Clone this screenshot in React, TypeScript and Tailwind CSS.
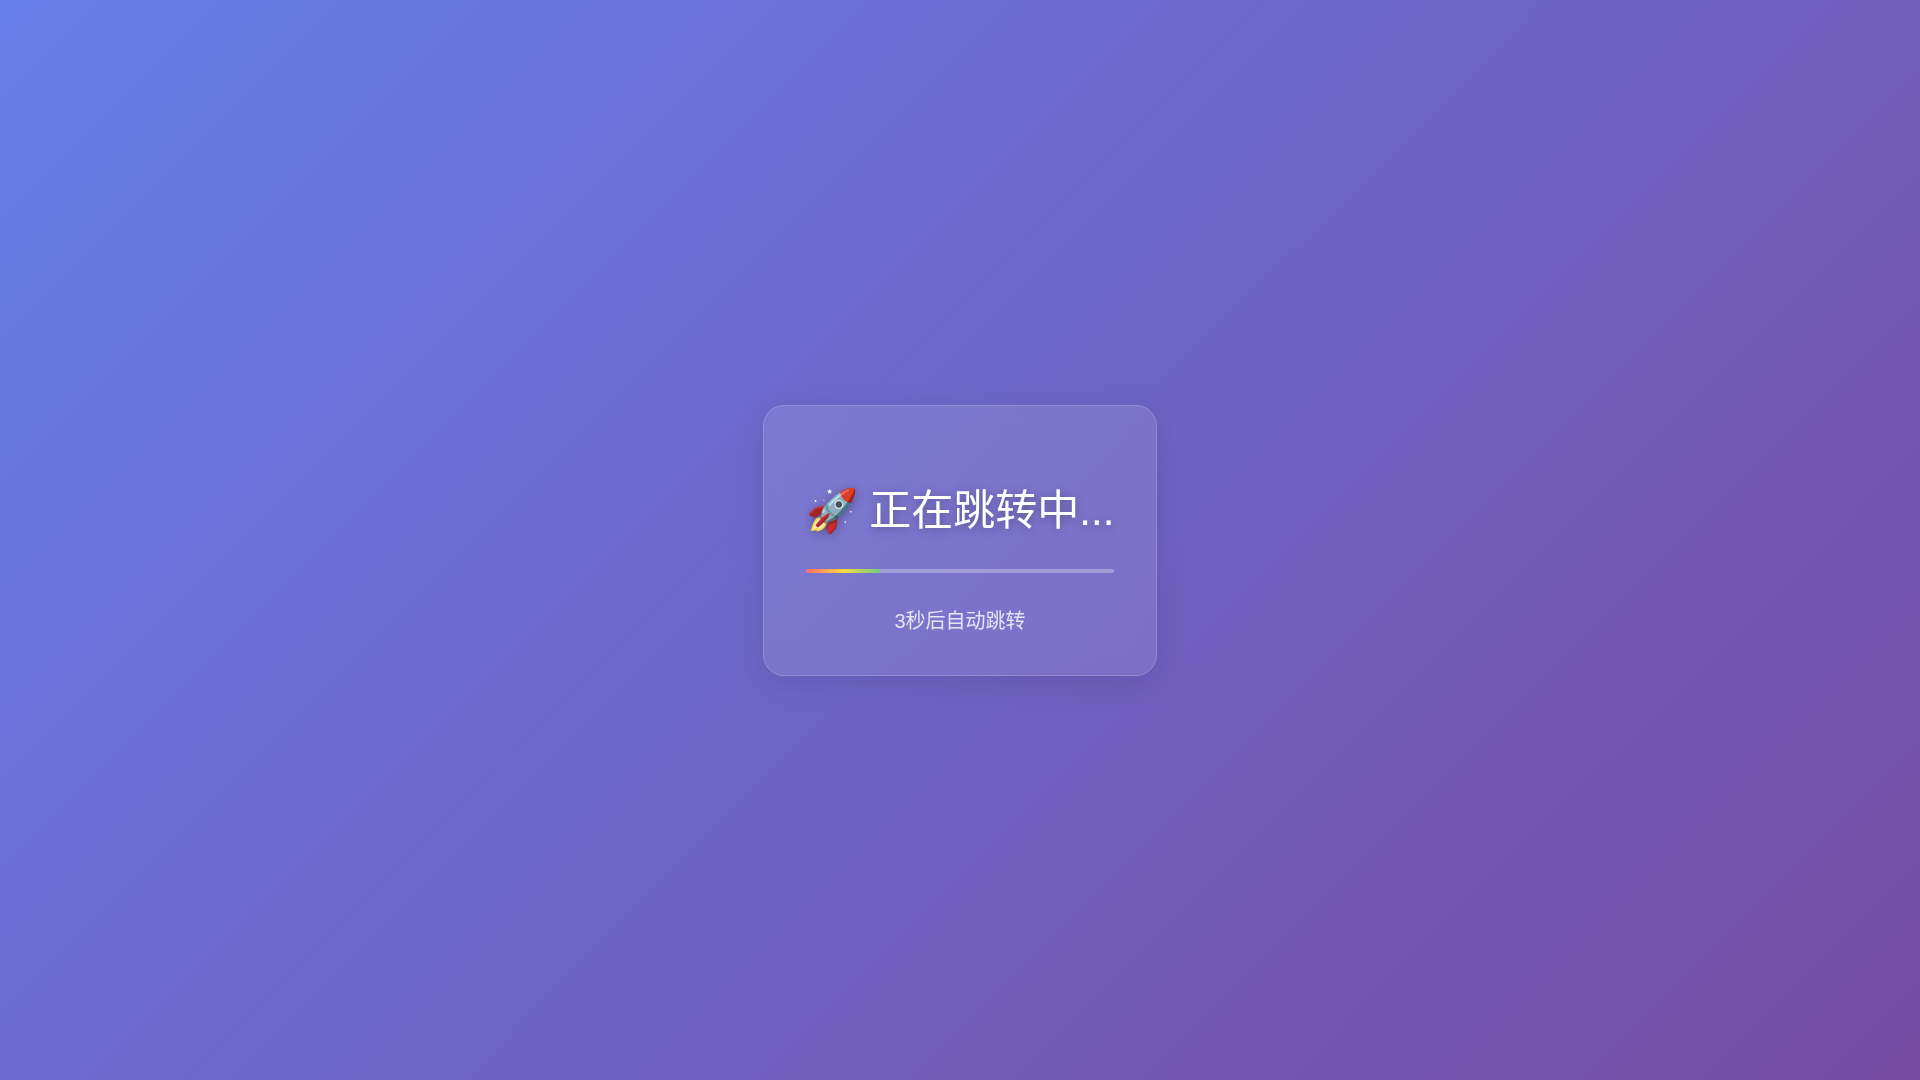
const progress = 24;

const App = () => {
  return (
    <main className="flex min-h-screen items-center justify-center bg-[linear-gradient(135deg,#667eea_0%,#764ba2_100%)] font-['Liberation_Sans','Noto_Sans_CJK_SC',sans-serif] text-white">
      <section className="rounded-[21px] border border-white/18 bg-white/10 px-[42px] pt-[75px] pb-10 text-center shadow-[0_8px_32px_rgba(0,0,0,0.1)] backdrop-blur-[10px]">
        <h1 className="text-[42px] leading-[60px] font-normal [text-shadow:0_2px_10px_rgba(0,0,0,0.3)]">🚀 正在跳转中...</h1>
        <div
          role="progressbar"
          aria-label="正在跳转中"
          aria-valuenow={progress}
          className="mt-7 mb-[34px] h-1 overflow-hidden rounded-sm bg-white/30"
        >
          <div
            className="h-full rounded-sm bg-[linear-gradient(90deg,#ff6b6b,#ffd93d,#6bcf7f)]"
            style={{ width: `${progress}%` }}
          />
        </div>
        <p className="text-xl text-white/80">3秒后自动跳转</p>
      </section>
    </main>
  );
};

export default App;
